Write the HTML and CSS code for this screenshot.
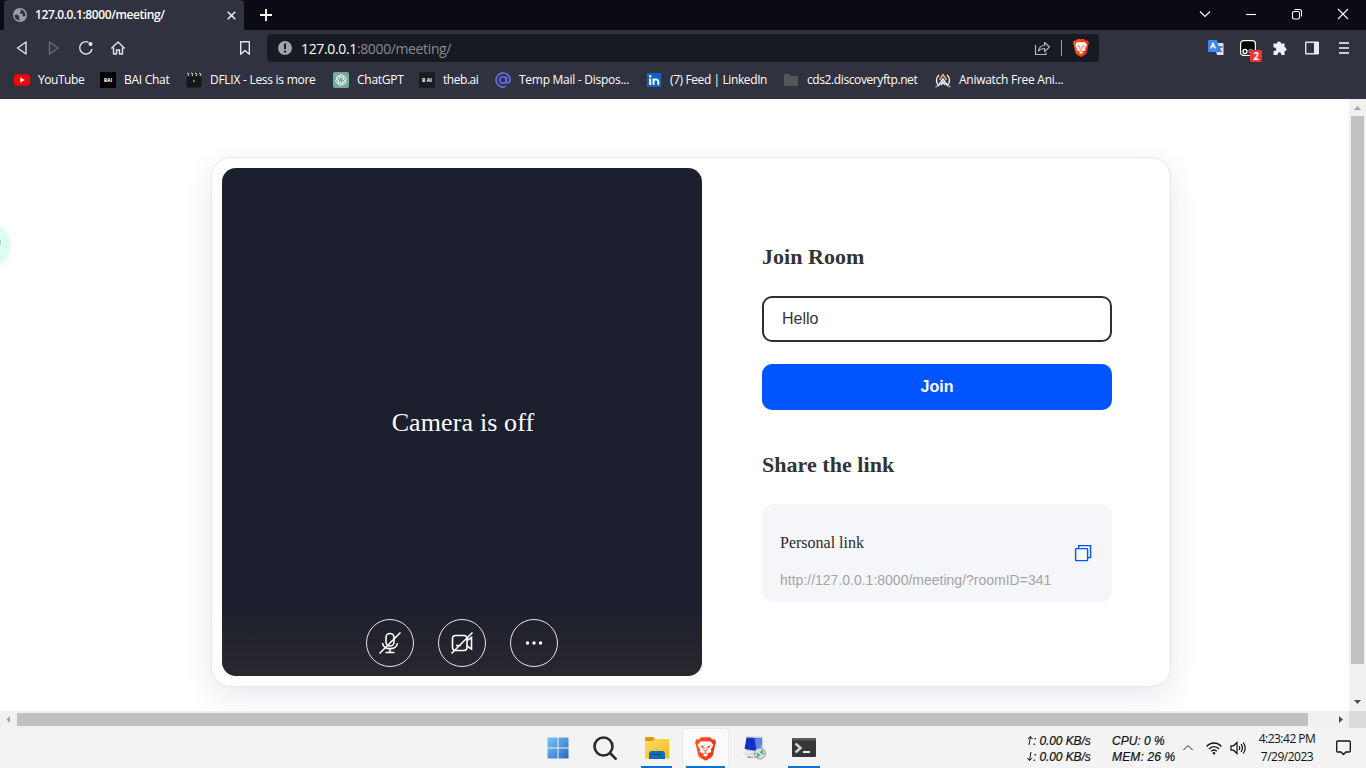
FILE: index.html
```html
<!DOCTYPE html>
<html lang="en">
<head>
<meta charset="utf-8">
<title>127.0.0.1:8000/meeting/</title>
<link rel="stylesheet" href="styles.css">
</head>
<body>
<header class="tabs">
  <div class="tab">
    <svg width="14" height="14" viewBox="0 0 14 14"><circle cx="7" cy="7" r="7" fill="#9a9ca7"/><path d="M1.500 7.500Q4 5.500 5.500 7.500T6 10.500L7 12.500Q2 12 1.500 7.500ZM7.500 1.500Q7 3 8 3.500L6.500 5.500 9.500 6 10 8.500 12.500 8Q12.500 2.500 7.500 1.500Z" fill="#30323f"/></svg>
    <span class="tab-title">127.0.0.1:8000/meeting/</span>
    <svg width="9" height="9" viewBox="0 0 9 9" fill="none" stroke="#f0f0f2" stroke-width="1.500"><path d="M.7.7l7.600 7.600M8.300.7L.7 8.300"/></svg>
  </div>
  <svg class="plus" width="12" height="12" viewBox="0 0 12 12" fill="none" stroke="#fff" stroke-width="1.800"><path d="M6 0v12M0 6h12"/></svg>
  <div class="window-controls">
    <svg width="12" height="12" viewBox="0 0 12 12"><path d="M1 3.500l5 5 5-5"/></svg>
    <svg width="12" height="12" viewBox="0 0 12 12"><path d="M1 6.500h10"/></svg>
    <svg width="12" height="12" viewBox="0 0 12 12"><rect x="1.500" y="3.500" width="7" height="7.500" rx="1.500"/><path d="M3.500 1.500h5q2 0 2 2v5"/></svg>
    <svg width="12" height="12" viewBox="0 0 12 12"><path d="M1 1l10 10M11 1L1 11"/></svg>
  </div>
</header>
<nav class="toolbar">
  <div class="nav-icons">
    <svg width="16" height="16" viewBox="0 0 16 16"><path d="M12 2v12L3.500 8z"/></svg>
    <svg class="dim" width="16" height="16" viewBox="0 0 16 16"><path d="M3.500 2v12L12 8z"/></svg>
    <svg width="16" height="16" viewBox="0 0 16 16"><path d="M10.500 2.200A6.200 6.200 0 1 0 14 9"/><circle cx="12.500" cy="4" r="2" fill="#ececf0" stroke="none"/></svg>
    <svg width="16" height="16" viewBox="0 0 16 16"><path d="M1.300 8.500L8 2l6.700 6.500M3.500 7.500v6.500h3v-4h3v4h3V7.500"/></svg>
  </div>
  <svg class="mark" width="16" height="16" viewBox="0 0 16 16"><path d="M3.700 1.700h8.600v12.500L8 10.500l-4.300 3.700z"/></svg>
  <div class="address">
    <svg width="14" height="14" viewBox="0 0 14 14" stroke="none"><circle cx="7" cy="7" r="7" fill="#a0a2ab"/><path d="M6 2.500h2v5.500H6zM6 9.500h2v2H6z" fill="#171a21"/></svg>
    <span class="url"><b>127.0.0.1</b>:8000/meeting/</span>
    <svg class="share" width="16" height="16" viewBox="0 0 16 16"><path d="M1.500 5v9.500h10.500v-2"/><path d="M4.500 11c.5-4 2.500-5.500 6-5.500V2.500l5 4.500-5 4.500v-3c-2.500 0-4.500.5-6 2.500z"/></svg>
    <i class="divider"></i>
    <svg class="shield" width="16" height="18" viewBox="0 0 24 27"><use href="#lion"/></svg>
  </div>
  <div class="extensions">
    <svg width="16" height="16" viewBox="0 0 16 16" stroke="none"><path d="M6 3h8.500q1 0 1 1v11H9z" fill="#dfe3e9"/><path d="M1 0h8l3 12H1Q0 12 0 11V1Q0 0 1 0z" fill="#4285f4"/><path d="M2.500 8.500L5 3l2.500 5.500M3.500 6.500h3" stroke="#fff" stroke-width="1.300" fill="none"/><path d="M9.500 7h5M12 6v1c0 2-1 4-2.500 5M10.500 8.500l3 3.500" stroke="#3d73c7" fill="none"/></svg>
    <div class="ext-badged">
      <svg width="16" height="16" viewBox="0 0 16 16"><rect x=".6" y=".6" width="14.800" height="14.800" rx="3" fill="#000" stroke="#fff" stroke-width="1.200"/><circle cx="5" cy="11.500" r="2" stroke="#fff"/><circle cx="11" cy="11.500" r="2" stroke="#888"/></svg>
      <span class="badge">2</span>
    </div>
    <svg width="16" height="16" viewBox="0 0 16 16" stroke="none"><path fill="#f1f1f3" d="M5 3.500a2 2 0 1 1 4 0h3.500v3.700a2 2 0 1 1 0 4V15H9.200v-1a1.800 1.800 0 0 0-3.600 0v1H1.500v-4h1a1.700 1.700 0 0 0 0-3.500h-1v-4z"/></svg>
    <svg width="16" height="16" viewBox="0 0 16 16" stroke-width="1.200"><rect x="1.700" y="2.200" width="12.600" height="11.600" rx=".5"/><path d="M10 2h4.500v12H10z" fill="#ececf0" stroke="none"/></svg>
    <svg width="16" height="16" viewBox="0 0 16 16"><path d="M3 3h10M3 8h10M3 13h10" stroke="#c9cad0"/></svg>
  </div>
</nav>
<nav class="bookmarks">
  <a><svg width="16" height="16" viewBox="0 0 16 16"><rect y="2.300" width="16" height="11.400" rx="3" fill="#f00"/><path d="M6.300 5.500v5L10.700 8z" fill="#fff"/></svg><span>YouTube</span></a>
  <a><span class="tile black">BAI</span><span>BAI Chat</span></a>
  <a><svg width="16" height="16" viewBox="0 0 16 16"><rect x=".5" y="4.500" width="15" height="11" rx="2" fill="#17171a"/><path d="M0 1l15-.5.5 4L1 5z" fill="#222"/><path d="M1 1l2 1-1 2M5 1l2 1-1 2M9 1l2 1-1 2M13 1l2 1-1 2" stroke="#ddd" fill="none"/><path d="M7 7.500v3L9.500 9z" fill="#888"/></svg><span>DFLIX - Less is more</span></a>
  <a><svg width="16" height="16" viewBox="0 0 16 16"><rect width="16" height="16" rx="2" fill="#75a99b"/><g fill="none" stroke="#fff" stroke-width=".8"><path id="petal" d="M8 6L10.200 4.800Q12 4 13 5.800 13.800 8 12 9L9.500 10.300"/><use href="#petal" transform="rotate(60 8 8)"/><use href="#petal" transform="rotate(120 8 8)"/><use href="#petal" transform="rotate(180 8 8)"/><use href="#petal" transform="rotate(240 8 8)"/><use href="#petal" transform="rotate(300 8 8)"/></g></svg><span>ChatGPT</span></a>
  <a><span class="tile">B AI</span><span>theb.ai</span></a>
  <a><svg width="16" height="16" viewBox="0 0 16 16" fill="none" stroke="#6570f5" stroke-width="1.600"><circle cx="8" cy="8" r="3.300"/><path d="M11.300 5v4.500q0 1.800 1.700 1.500c1.500-.3 2-1.500 2-3A7 7 0 1 0 11 14.400"/></svg><span>Temp Mail - Dispos...</span></a>
  <a><svg width="16" height="16" viewBox="0 0 16 16"><path fill="#0a66c2" d="M1 1h14v14H1z"/><path d="M4.200 6.500V13M7.500 13V6.500m0 3.500c0-3.500 4.800-3.500 4.800 0v3" fill="none" stroke="#fff" stroke-width="1.900"/><circle cx="4.200" cy="4.200" r="1.200" fill="#fff"/></svg><span class="tight">(7) Feed | LinkedIn</span></a>
  <a><svg width="16" height="16" viewBox="0 0 16 16"><path d="M1 2h5l2 2h7v10H1z" fill="#55565a"/></svg><span class="tight">cds2.discoveryftp.net</span></a>
  <a><svg width="16" height="16" viewBox="0 0 16 16" fill="none" stroke="#f5f5f5" stroke-width="1.400"><path d="M4 3C.5 6 1 10.500 3.500 13.500L8 7l4.500 6.500c2.500-3 3-7.500-.5-10.500"/><path d="M4.500 8L8 2.500 11.500 8" stroke="#d9b979"/><path d="M6 13l2-3 2 3"/><path d="M.5 14.500h2M13.500 14.500h2" stroke="#e8bd6a"/></svg><span>Aniwatch Free Ani...</span></a>
</nav>
<main class="viewport">
  <div class="page">
    <section class="card">
      <div class="video">
        <p class="camera-text">Camera is off</p>
        <div class="controls">
          <button><svg width="24" height="24" viewBox="0 0 24 24"><rect x="8" y="2.500" width="8" height="12.500" rx="4"/><path d="M4.500 12c.8 7.500 14.200 7.500 15 0M12 17.500V21M7.500 21.500h9M22.500 1.500L1.500 22.500"/></svg></button>
          <button><svg width="24" height="24" viewBox="0 0 24 24"><rect x="2.500" y="4.500" width="14.500" height="15" rx="3"/><path d="M17 9.500l4.500-3v11.500L17 15M6 14.500h5M22.500 1.500L1.500 22.500"/></svg></button>
          <button><svg width="24" height="24" viewBox="0 0 24 24"><g fill="#fff" stroke="none"><circle cx="5.500" cy="12" r="1.700"/><circle cx="12" cy="12" r="1.700"/><circle cx="18.500" cy="12" r="1.700"/></g></svg></button>
        </div>
      </div>
      <div class="form">
        <h2>Join Room</h2>
        <div class="name-input">Hello</div>
        <button class="join">Join</button>
        <h2>Share the link</h2>
        <div class="link-box">
          <div><p class="link-label">Personal link</p><p class="link-url">http://127.0.0.1:8000/meeting/?roomID=341</p></div>
          <svg width="18" height="18" viewBox="0 0 18 18" fill="none" stroke="#0055ff" stroke-width="1.400"><rect x="1.600" y="4.600" width="12" height="12" rx=".7"/><path d="M4.600 4.500V1.600h12v12h-3"/></svg>
        </div>
      </div>
    </section>
    <div class="floating-bubble"></div>
  </div>
  <div class="scroll-v"><svg width="17" height="17" viewBox="0 0 17 17"><path d="M5 11h7L8.500 7z" fill="#a3a3a3"/></svg><i></i><svg width="17" height="17" viewBox="0 0 17 17"><path d="M5 6h7l-3.500 4z" fill="#505050"/></svg></div>
  <div class="scroll-h"><svg width="17" height="17" viewBox="0 0 17 17"><path d="M10 5v7L6.500 8.500z" fill="#a3a3a3"/></svg><i></i><svg width="17" height="17" viewBox="0 0 17 17"><path d="M7 5v7l4-3.500z" fill="#505050"/></svg></div>
  <div class="corner"></div>
</main>
<footer class="taskbar">
  <div class="apps">
    <div class="app"><svg width="22" height="22" viewBox="0 0 22 22"><defs><linearGradient id="win" gradientUnits="userSpaceOnUse" x1="0" y1="0" x2="22" y2="22"><stop stop-color="#7cc7f7"/><stop offset="1" stop-color="#2667c4"/></linearGradient></defs><path fill="url(#win)" d="M.5 1q0-.5.500-.5h9.500v10H.5zM11.500.5H21q.5 0 .5.500v9.500h-10zM.5 11.500h10v10H1q-.5 0-.5-.5zM11.500 11.500h10V21q0 .5-.5.500h-9.500z"/></svg></div>
    <div class="app search"><svg width="24" height="24" viewBox="0 0 24 24" fill="none" stroke="#2b2b2e" stroke-width="2.600"><circle cx="10.500" cy="10.500" r="9"/><path d="M17 17l6.500 6.500"/></svg></div>
    <div class="app running folder"><svg width="24" height="22" viewBox="0 0 24 22"><defs><linearGradient id="folder" x2="1" y2="1"><stop stop-color="#ffde6c"/><stop offset="1" stop-color="#fcb813"/></linearGradient></defs><path d="M0 1q0-1 1-1h7l2 2v4H0z" fill="#d99c00"/><path d="M0 4h8l2-2h14v19.500H0z" fill="url(#folder)"/><path d="M4 22v-5q0-3 3-3h10q3 0 3 3v5z" fill="#0f6cbd"/><path d="M7 17.500h10" stroke="#07477d"/></svg></div>
    <div class="app running active"><svg width="21" height="24" viewBox="0 0 24 27"><defs><linearGradient id="brave" x2="1"><stop stop-color="#ff5a1f"/><stop offset="1" stop-color="#f72b13"/></linearGradient></defs><g id="lion" stroke="none"><path d="M7 0h10l2.500 2.500 3-.2L24 6l-1 3-2.500 11Q20 22 18 23.500L12 27l-6-3.500Q4 22 3.500 20L1 9 0 6l1.500-3.700 3 .2z" fill="url(#brave)"/><path d="M6.500 4.500L9.500 5 12 4.500l2.500.5 3-.5 3.500 4.500-3 5 .5 3-4 1.500.5 1.700L12 22.500l-3-2.300.5-1.700-4-1.500.5-3L3 9z" fill="#fff"/><path d="M5.500 9.500l4.500.7-.8 2.300zM18.500 9.500l-4.500.7.8 2.300z" fill="#fb421b"/><path d="M10.500 11.500L10 14.500l2 1.500 2-1.500-.5-3M12 16v1.500M9 19.300l3-1.500 3 1.500" fill="none" stroke="#fb421b" stroke-width="1"/></g></svg></div>
    <div class="app remote"><svg width="24" height="24" viewBox="0 0 24 24"><path d="M3 1l16-1 2 15-17 1z" fill="#c3ccd5" transform="rotate(5 12 8)"/><path d="M3.500 1.500l15.500 1-1.500 13L1.500 13z" fill="#1231c4"/><path d="M11.500 2l7.500.5-1.500 13-4-.6z" fill="#5d83ee"/><path d="M7 17l7 .5 1 4.500H4z" fill="#909da8"/><path d="M0 16l12 2v4L1 19z" fill="#dce3e8"/><circle cx="17" cy="17.500" r="5.500" fill="#d6dadd" stroke="#929b9f"/><path d="M13.800 17.500l2.200 1.500-2 2M20 14.500l-2 1.700 2.500 1.800" fill="none" stroke="#24a63c" stroke-width="1.300"/></svg></div>
    <div class="app running"><svg class="terminal" width="24" height="19" viewBox="0 0 24 19"><rect width="24" height="19" rx="1" fill="#363638"/><path d="M0 1q0-1 1-1h22q1 0 1 1v1.500H0z" fill="#5b5c60"/><path d="M3.500 5.500l5 4.500-5 4.500" fill="none" stroke="#d1d1d1" stroke-width="2.500"/><path d="M11 14h7" stroke="#fff" stroke-width="1.800"/></svg></div>
  </div>
  <div class="tray">
    <div class="meter net"><p><svg width="6" height="9" viewBox="0 0 6 9"><path d="M2 9L3.500.5M.8 3L3.500.5 5.500 3" fill="none" stroke="#111"/></svg>: 0.00 KB/s</p><p><svg width="6" height="9" viewBox="0 0 6 9"><path d="M4 0L2.500 8.500M.5 6l2 2.500L5.200 6" fill="none" stroke="#111"/></svg>: 0.00 KB/s</p></div>
    <div class="meter cpu"><p>CPU: 0 %</p><p>MEM: 26 %</p></div>
    <svg class="chevron" width="12" height="12" viewBox="0 0 12 12" fill="none" stroke="#222"><path d="M1.500 8L6 3.500 10.500 8"/></svg>
    <svg class="wifi" width="16" height="13" viewBox="0 0 16 13" fill="none" stroke="#111" stroke-width="1.400"><path d="M.7 4.500c4-4.700 10.600-4.700 14.600 0M3 7c2.800-3.200 7.200-3.200 10 0M5.200 9.300c1.600-1.800 4-1.800 5.600 0"/><circle cx="8" cy="11.300" r="1.200" fill="#111" stroke="none"/></svg>
    <svg class="volume" width="17" height="14" viewBox="0 0 17 14" fill="none" stroke="#111" stroke-width="1.200"><path d="M1 4.800h2.500L7 1.500v11L3.500 9.200H1zM9 5q1.500 2 0 4M11 3.200q3 3.800 0 7.600M13.200 1.500q4 5.500 0 11"/></svg>
    <div class="clock"><p>4:23:42 PM</p><p>7/29/2023</p></div>
    <svg class="notice" width="15" height="16" viewBox="0 0 15 16" fill="none" stroke="#111" stroke-width="1.300"><path d="M2 1h11q1.300 0 1.300 1.300v8.400q0 1.300-1.300 1.300H10l-2.500 2.500L5 12H2Q.7 12 .7 10.700V2.300Q.7 1 2 1z"/></svg>
  </div>
</footer>
</body>
</html>
```
FILE: styles.css
```css
* { box-sizing: border-box; }
body { margin: 0; width: 1366px; height: 768px; overflow: hidden; display: flex; flex-direction: column; font-family: "Open Sans", "Noto Sans", sans-serif; background: #fff; }
p, h2 { margin: 0; }
svg { display: block; flex: none; }

.tabs { height: 30px; flex: none; background: #0b0b14; display: flex; align-items: center; padding-left: 4px; }
.tab { width: 240px; height: 30px; background: #30323f; border-radius: 4px 4px 0 0; display: flex; align-items: center; padding: 0 8px 0 9px; }
.tab-title { flex: 1; margin: 0 0 1px 8px; font-size: 12px; font-weight: 600; color: #fff; letter-spacing: -0.4px; white-space: nowrap; }
.plus { margin-left: 16px; }
.window-controls { margin-left: auto; display: flex; gap: 34px; padding-right: 17px; margin-top: -2px; }
.window-controls svg { fill: none; stroke: #fff; stroke-width: 1.1; }

.toolbar { height: 36px; flex: none; background: #30323f; display: flex; align-items: center; padding: 0 14px; }
.toolbar svg { fill: none; stroke: #e4e4e8; stroke-width: 1.4; stroke-linejoin: round; }
.toolbar svg.dim { stroke: #6b6d78; }
.nav-icons { display: flex; gap: 16px; }
.toolbar .mark { margin-left: 111px; }
.address { width: 832px; height: 28px; margin-left: 14px; background: #171a21; border-radius: 4px; display: flex; align-items: center; padding: 0 10px 0 11px; }
.url { margin-left: 9px; flex: 1; font-size: 14px; letter-spacing: -0.37px; color: #878a92; }
.url b { color: #fff; font-weight: 400; letter-spacing: -0.35px; }
.toolbar .share { stroke: #b3b5bc; stroke-width: 1.2; }
.divider { width: 1px; height: 16px; background: #9a9ca3; margin: 0 11px 0 11px; }
.toolbar .address svg:first-child, .toolbar .shield { stroke: none; }
.extensions { display: flex; gap: 16px; margin-left: auto; }
.extensions > svg:first-child, .extensions > svg:nth-of-type(2) { stroke: none; }
.extensions > svg:last-child { stroke-width: 2; }
.ext-badged { position: relative; }
.badge { position: absolute; left: 10px; top: 10px; width: 12px; height: 12px; border-radius: 2px; background: #ef3337; color: #fff; font-size: 10px; font-weight: 700; line-height: 12px; text-align: center; }

.bookmarks { height: 33px; flex: none; background: #30323f; padding: 0 0 5px 14px; display: grid; grid-template-columns: 86px 86px 147px 86px 76px 151px 137px 152px 150px; align-items: center; }
.bookmarks a { display: flex; align-items: center; gap: 8px; color: #fff; font-size: 12px; letter-spacing: -0.27px; white-space: nowrap; }
.bookmarks a span:last-child { margin-top: -2px; }
.bookmarks a:nth-child(1) span, .bookmarks a:nth-child(5) span:last-child { letter-spacing: -0.45px; }
.bookmarks .tight { letter-spacing: -0.4px; }
.tile { width: 16px; height: 16px; background: #1c1c1d; color: #ddd; font-size: 5px; font-weight: 800; line-height: 16px; text-align: center; letter-spacing: 0; }
.tile.black { background: #000; }

.viewport { flex: 1; display: grid; grid-template-columns: 1349px 17px; grid-template-rows: 612px 17px; }
.page { position: relative; overflow: hidden; padding: 58px 0 0 211px; background: #fff; }
.card { width: 960px; height: 530px; border: 1px solid #e5e7ed; border-radius: 20px; padding: 10px; background: #fff; display: flex; box-shadow: 0 10px 30px rgba(24, 39, 75, 0.1); }
.video { width: 480px; height: 508px; border-radius: 14px; background: linear-gradient(#1c1f2e 86%, #2a282d 100%); display: flex; flex-direction: column; align-items: center; justify-content: space-between; padding: 239px 0 9px; color: #fff; }
.camera-text { font: 26px/32px "Liberation Serif", serif; letter-spacing: 0.13px; padding-left: 2px; }
.controls { display: flex; gap: 24px; }
.controls button { width: 48px; height: 48px; padding: 0; border: 1px solid #e6e6e8; border-radius: 50%; background: transparent; display: flex; align-items: center; justify-content: center; }
.controls svg { fill: none; stroke: #fff; stroke-width: 1.6; }
.form { width: 350px; margin-left: 60px; padding-top: 75px; display: flex; flex-direction: column; color: #333; }
.form h2 { font: 700 22px/28px "Liberation Serif", serif; letter-spacing: 0.04px; }
.name-input { margin-top: 25px; height: 46px; border: 2px solid #2f2f31; border-radius: 10px; padding-left: 18px; font: 16px/42px "Liberation Sans", sans-serif; }
.join { margin: 22px 0 41px; height: 46px; border: 0; border-radius: 10px; background: #0055ff; color: #fff; font: 700 16px/46px "Liberation Sans", sans-serif; padding: 0; }
.link-box { margin-top: 25px; height: 98px; border-radius: 12px; background: #f5f6fa; padding: 28px 20px 0 18px; display: flex; justify-content: space-between; }
.link-box svg { margin-top: 12px; }
.link-label { font: 16px/22px "Liberation Serif", serif; color: #2a2a2a; }
.link-url { margin-top: 17px; font: 14px/18px "Liberation Sans", sans-serif; color: #a4a4a4; white-space: nowrap; }
.floating-bubble { position: absolute; left: -34px; top: 123px; width: 44px; height: 44px; border-radius: 50%; background: #d9fff1; box-shadow: 0 2px 6px rgba(0, 0, 0, 0.08); }
.floating-bubble::after { content: ""; position: absolute; left: 33px; top: 18px; width: 2px; height: 5px; background: #b9cfc6; }
.scroll-v { background: #f1f1f1; display: flex; flex-direction: column; }
.scroll-v i { width: 13px; height: 548px; margin: 0 auto auto; background: #c1c1c1; }
.scroll-h { background: #f1f1f1; display: flex; align-items: center; }
.scroll-h i { width: 1291px; height: 13px; margin-right: auto; background: #c1c1c1; }
.corner { background: #dcdcdc; }

.taskbar { height: 40px; flex: none; background: #f3f3f3; display: flex; justify-content: space-between; padding-left: 534px; }
.apps { display: flex; gap: 2px; }
.app { width: 47.3px; height: 40px; display: flex; align-items: center; justify-content: center; position: relative; }
.search { padding-right: 3px; }
.folder { padding-left: 2px; }
.remote { padding-left: 1px; }
.terminal { margin-bottom: 1px; }
.running::after { content: ""; position: absolute; left: 8px; right: 8px; bottom: 0; height: 2px; background: #0874ce; }
.active { background: #fbfbfb; border: 1px solid #e7e7e7; border-bottom: 0; border-radius: 4px; }
.active::after { left: 3px; right: 3px; }
.tray { display: flex; align-items: center; padding-right: 15px; color: #111; }
.meter { font: italic 12px/16px "Liberation Sans", sans-serif; letter-spacing: -0.1px; white-space: nowrap; -webkit-text-stroke: 0.2px #111; }
.meter p { display: flex; align-items: center; white-space: pre; }
.net { width: 85px; }
.cpu { width: 71px; margin-right: -1px; letter-spacing: 0; }
.cpu p:last-child { letter-spacing: 0.15px; }
.meter { padding-top: 1px; }
.wifi { margin-left: 12px; }
.volume { margin-left: 8px; }
.clock { width: 68px; margin: 0 0 1px 6px; font-size: 12px; line-height: 18px; letter-spacing: -0.5px; text-align: center; white-space: nowrap; }
.notice { margin-left: 15px; }
```
